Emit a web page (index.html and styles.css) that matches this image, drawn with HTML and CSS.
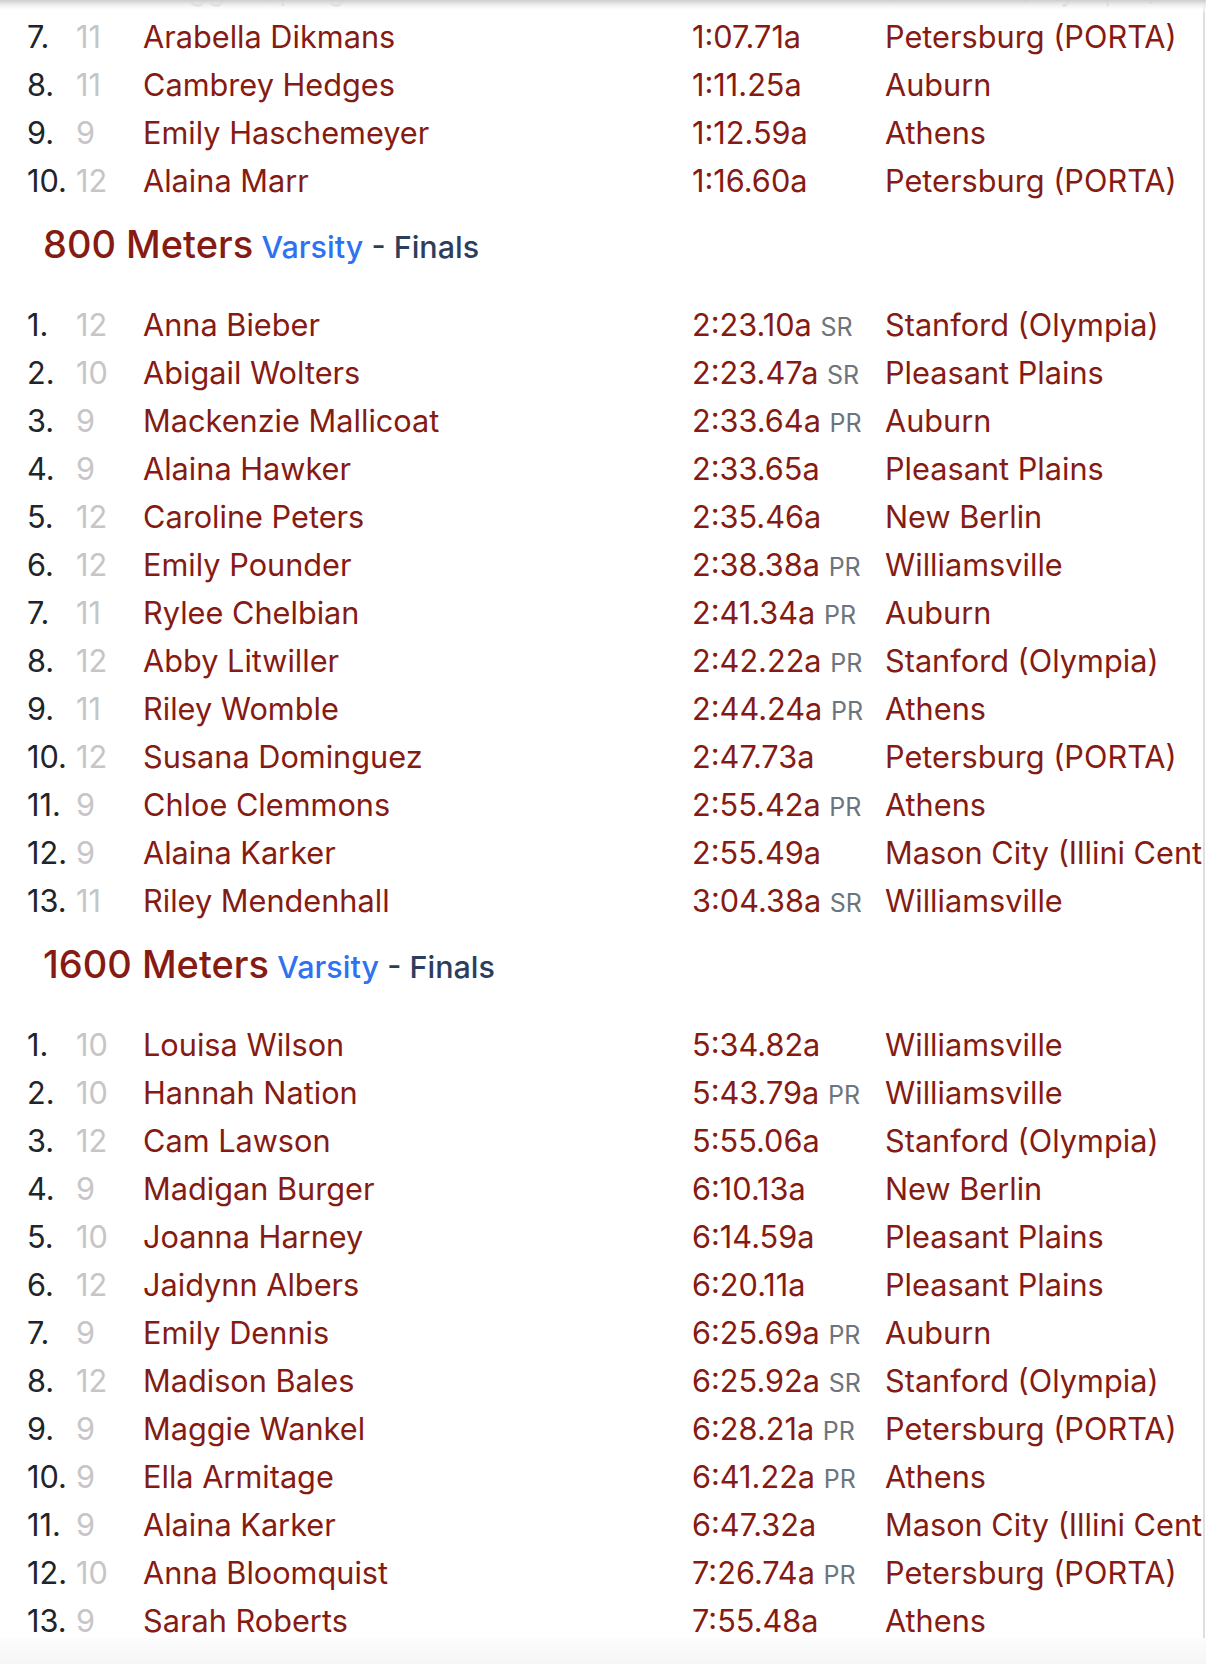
FILE: index.html
```html
<!DOCTYPE html>
<html lang="en">
<head>
<meta charset="utf-8">
<title>Results</title>
<link rel="stylesheet" href="styles.css">
</head>
<body>
<div class="page">
  <div class="results">
    <div class="rows">
      <div class="row"><span class="place">6.</span><span class="grade">12</span><span class="name">Maggie Sprague</span><span class="time">1:05.94a</span><span class="team">Stanford (Olympia)</span></div>
      <div class="row"><span class="place">7.</span><span class="grade">11</span><span class="name">Arabella Dikmans</span><span class="time">1:07.71a</span><span class="team">Petersburg (PORTA)</span></div>
      <div class="row"><span class="place">8.</span><span class="grade">11</span><span class="name">Cambrey Hedges</span><span class="time">1:11.25a</span><span class="team">Auburn</span></div>
      <div class="row"><span class="place">9.</span><span class="grade">9</span><span class="name">Emily Haschemeyer</span><span class="time">1:12.59a</span><span class="team">Athens</span></div>
      <div class="row"><span class="place">10.</span><span class="grade">12</span><span class="name">Alaina Marr</span><span class="time">1:16.60a</span><span class="team">Petersburg (PORTA)</span></div>
    </div>

    <h5 class="event-title"><span class="event-name">800 Meters</span> <span class="division">Varsity</span> <span class="round">- Finals</span></h5>
    <div class="rows">
      <div class="row"><span class="place">1.</span><span class="grade">12</span><span class="name">Anna Bieber</span><span class="time">2:23.10a <span class="mark">SR</span></span><span class="team">Stanford (Olympia)</span></div>
      <div class="row"><span class="place">2.</span><span class="grade">10</span><span class="name">Abigail Wolters</span><span class="time">2:23.47a <span class="mark">SR</span></span><span class="team">Pleasant Plains</span></div>
      <div class="row"><span class="place">3.</span><span class="grade">9</span><span class="name">Mackenzie Mallicoat</span><span class="time">2:33.64a <span class="mark">PR</span></span><span class="team">Auburn</span></div>
      <div class="row"><span class="place">4.</span><span class="grade">9</span><span class="name">Alaina Hawker</span><span class="time">2:33.65a</span><span class="team">Pleasant Plains</span></div>
      <div class="row"><span class="place">5.</span><span class="grade">12</span><span class="name">Caroline Peters</span><span class="time">2:35.46a</span><span class="team">New Berlin</span></div>
      <div class="row"><span class="place">6.</span><span class="grade">12</span><span class="name">Emily Pounder</span><span class="time">2:38.38a <span class="mark">PR</span></span><span class="team">Williamsville</span></div>
      <div class="row"><span class="place">7.</span><span class="grade">11</span><span class="name">Rylee Chelbian</span><span class="time">2:41.34a <span class="mark">PR</span></span><span class="team">Auburn</span></div>
      <div class="row"><span class="place">8.</span><span class="grade">12</span><span class="name">Abby Litwiller</span><span class="time">2:42.22a <span class="mark">PR</span></span><span class="team">Stanford (Olympia)</span></div>
      <div class="row"><span class="place">9.</span><span class="grade">11</span><span class="name">Riley Womble</span><span class="time">2:44.24a <span class="mark">PR</span></span><span class="team">Athens</span></div>
      <div class="row"><span class="place">10.</span><span class="grade">12</span><span class="name">Susana Dominguez</span><span class="time">2:47.73a</span><span class="team">Petersburg (PORTA)</span></div>
      <div class="row"><span class="place">11.</span><span class="grade">9</span><span class="name">Chloe Clemmons</span><span class="time">2:55.42a <span class="mark">PR</span></span><span class="team">Athens</span></div>
      <div class="row"><span class="place">12.</span><span class="grade">9</span><span class="name">Alaina Karker</span><span class="time">2:55.49a</span><span class="team">Mason City (Illini Central)</span></div>
      <div class="row"><span class="place">13.</span><span class="grade">11</span><span class="name">Riley Mendenhall</span><span class="time">3:04.38a <span class="mark">SR</span></span><span class="team">Williamsville</span></div>
    </div>

    <h5 class="event-title"><span class="event-name">1600 Meters</span> <span class="division">Varsity</span> <span class="round">- Finals</span></h5>
    <div class="rows">
      <div class="row"><span class="place">1.</span><span class="grade">10</span><span class="name">Louisa Wilson</span><span class="time">5:34.82a</span><span class="team">Williamsville</span></div>
      <div class="row"><span class="place">2.</span><span class="grade">10</span><span class="name">Hannah Nation</span><span class="time">5:43.79a <span class="mark">PR</span></span><span class="team">Williamsville</span></div>
      <div class="row"><span class="place">3.</span><span class="grade">12</span><span class="name">Cam Lawson</span><span class="time">5:55.06a</span><span class="team">Stanford (Olympia)</span></div>
      <div class="row"><span class="place">4.</span><span class="grade">9</span><span class="name">Madigan Burger</span><span class="time">6:10.13a</span><span class="team">New Berlin</span></div>
      <div class="row"><span class="place">5.</span><span class="grade">10</span><span class="name">Joanna Harney</span><span class="time">6:14.59a</span><span class="team">Pleasant Plains</span></div>
      <div class="row"><span class="place">6.</span><span class="grade">12</span><span class="name">Jaidynn Albers</span><span class="time">6:20.11a</span><span class="team">Pleasant Plains</span></div>
      <div class="row"><span class="place">7.</span><span class="grade">9</span><span class="name">Emily Dennis</span><span class="time">6:25.69a <span class="mark">PR</span></span><span class="team">Auburn</span></div>
      <div class="row"><span class="place">8.</span><span class="grade">12</span><span class="name">Madison Bales</span><span class="time">6:25.92a <span class="mark">SR</span></span><span class="team">Stanford (Olympia)</span></div>
      <div class="row"><span class="place">9.</span><span class="grade">9</span><span class="name">Maggie Wankel</span><span class="time">6:28.21a <span class="mark">PR</span></span><span class="team">Petersburg (PORTA)</span></div>
      <div class="row"><span class="place">10.</span><span class="grade">9</span><span class="name">Ella Armitage</span><span class="time">6:41.22a <span class="mark">PR</span></span><span class="team">Athens</span></div>
      <div class="row"><span class="place">11.</span><span class="grade">9</span><span class="name">Alaina Karker</span><span class="time">6:47.32a</span><span class="team">Mason City (Illini Central)</span></div>
      <div class="row"><span class="place">12.</span><span class="grade">10</span><span class="name">Anna Bloomquist</span><span class="time">7:26.74a <span class="mark">PR</span></span><span class="team">Petersburg (PORTA)</span></div>
      <div class="row"><span class="place">13.</span><span class="grade">9</span><span class="name">Sarah Roberts</span><span class="time">7:55.48a</span><span class="team">Athens</span></div>
    </div>
  </div>
  <div class="shade-top"></div>
  <div class="shade-bottom"></div>
</div>
</body>
</html>
```

FILE: styles.css
```css
html, body {
  margin: 0;
  padding: 0;
  background: #ffffff;
}

body {
  font-family: Inter, "Noto Sans", "Liberation Sans", sans-serif;
  color: #212529;
  -webkit-font-smoothing: antialiased;
}

.page {
  position: relative;
  width: 1206px;
  height: 1664px;
  overflow: hidden;
}

.results {
  width: 1203px;
  border-right: 2px solid #dedede;
  overflow: hidden;
  margin-top: -36px;
  height: 1720px;
}

.row {
  display: grid;
  grid-template-columns: 49px 67px 549px 193px 1fr;
  align-items: center;
  height: 48px;
  padding-left: 27px;
  font-size: 30.7px;
  white-space: nowrap;
}

.place {
  color: #212529;
}

.grade {
  color: #c6c6c6;
}

.name,
.time,
.team {
  color: #851b12;
}

.mark {
  color: #6c757d;
  font-size: 25px;
}

.event-title {
  margin: 0;
  padding: 19px 0 35px 43px;
  height: 42px;
  line-height: 42px;
  font-size: 31px;
  font-weight: 500;
  white-space: nowrap;
}

.event-name {
  color: #851b12;
  font-size: 38px;
}

.division {
  color: #2f72f0;
  font-size: 30.5px;
}

.round {
  color: #2c3e5c;
  font-size: 30.5px;
}

.shade-top {
  position: absolute;
  left: 0;
  top: 0;
  width: 100%;
  height: 14px;
  background: linear-gradient(to bottom, rgba(205, 205, 205, 1), rgba(238, 238, 238, 0.95) 35%, rgba(255, 255, 255, 0.5) 70%, rgba(255, 255, 255, 0));
}

.shade-bottom {
  position: absolute;
  left: 0;
  bottom: 0;
  width: 100%;
  height: 26px;
  background: linear-gradient(to bottom, rgba(252, 252, 252, 0.96), rgba(246, 246, 246, 0.98));
}
```
